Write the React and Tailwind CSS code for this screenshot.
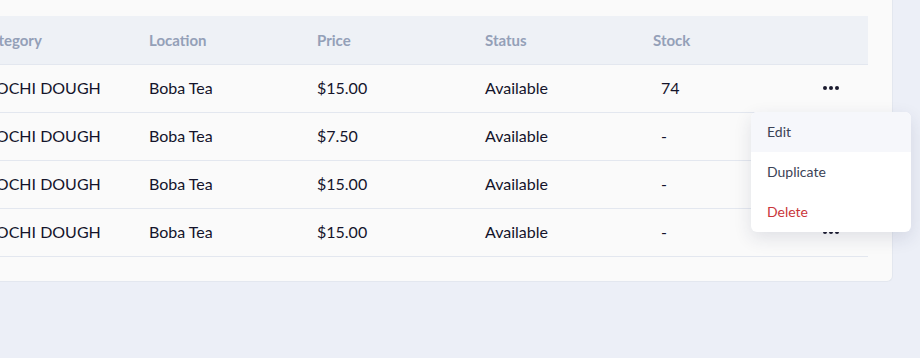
const rows = [
  { category: 'MOCHI DOUGH', location: 'Boba Tea', price: '$15.00', status: 'Available', stock: '74' },
  { category: 'MOCHI DOUGH', location: 'Boba Tea', price: '$7.50', status: 'Available', stock: '-' },
  { category: 'MOCHI DOUGH', location: 'Boba Tea', price: '$15.00', status: 'Available', stock: '-' },
  { category: 'MOCHI DOUGH', location: 'Boba Tea', price: '$15.00', status: 'Available', stock: '-' },
]

const headers = ['Category', 'Location', 'Price', 'Status', 'Stock']

function Dots() {
  return (
    <svg width="16" height="4" viewBox="0 0 16 4" className="text-[#1a1a2e]">
      <circle cx="2" cy="2" r="2" fill="currentColor" />
      <circle cx="8" cy="2" r="2" fill="currentColor" />
      <circle cx="14" cy="2" r="2" fill="currentColor" />
    </svg>
  )
}

function ActionMenu() {
  return (
    <div className="absolute left-[-70px] top-[47px] z-10 w-[160px] overflow-hidden rounded-md bg-white text-[14px] shadow-[0_6px_18px_rgba(30,40,80,0.12)]">
      <div className="flex h-10 items-center bg-[#f6f7fb] px-4 text-[#3b4256]">Edit</div>
      <div className="flex h-10 items-center px-4 text-[#3b4256]">Duplicate</div>
      <div className="flex h-10 items-center px-4 text-[#c9363a]">Delete</div>
    </div>
  )
}

export default function App() {
  return (
    <div className="h-[358px] w-[920px] overflow-hidden bg-[#eceff7]" style={{ fontFamily: 'Lato, "Noto Sans", sans-serif' }}>
      <div className="-mt-4 ml-[-39px] w-[932px] rounded-br-md border-b border-r border-[#e3e7ef] bg-[#fafafa] pb-6 pt-8 pl-5 pr-[25px]">
        <table className="w-[887px] table-fixed border-collapse text-left">
          <thead>
            <tr className="h-12 bg-[#eef1f6]">
              {headers.map((h) => (
                <th key={h} className="w-[168px] px-0 text-[15px] font-bold text-[#94a0b8]">{h}</th>
              ))}
              <th className="w-[47px]" />
            </tr>
          </thead>
          <tbody>
            {rows.map((r, i) => (
              <tr key={i} className="h-12 border-t border-[#e3e7ef] text-[16px] text-[#14142b] last:border-b">
                <td className="whitespace-nowrap">{r.category}</td>
                <td>{r.location}</td>
                <td>{r.price}</td>
                <td>{r.status}</td>
                <td className="pl-2">{r.stock}</td>
                <td className="relative pl-0.5">
                  <Dots />
                  {i === 0 && <ActionMenu />}
                </td>
              </tr>
            ))}
          </tbody>
        </table>
      </div>
    </div>
  )
}
